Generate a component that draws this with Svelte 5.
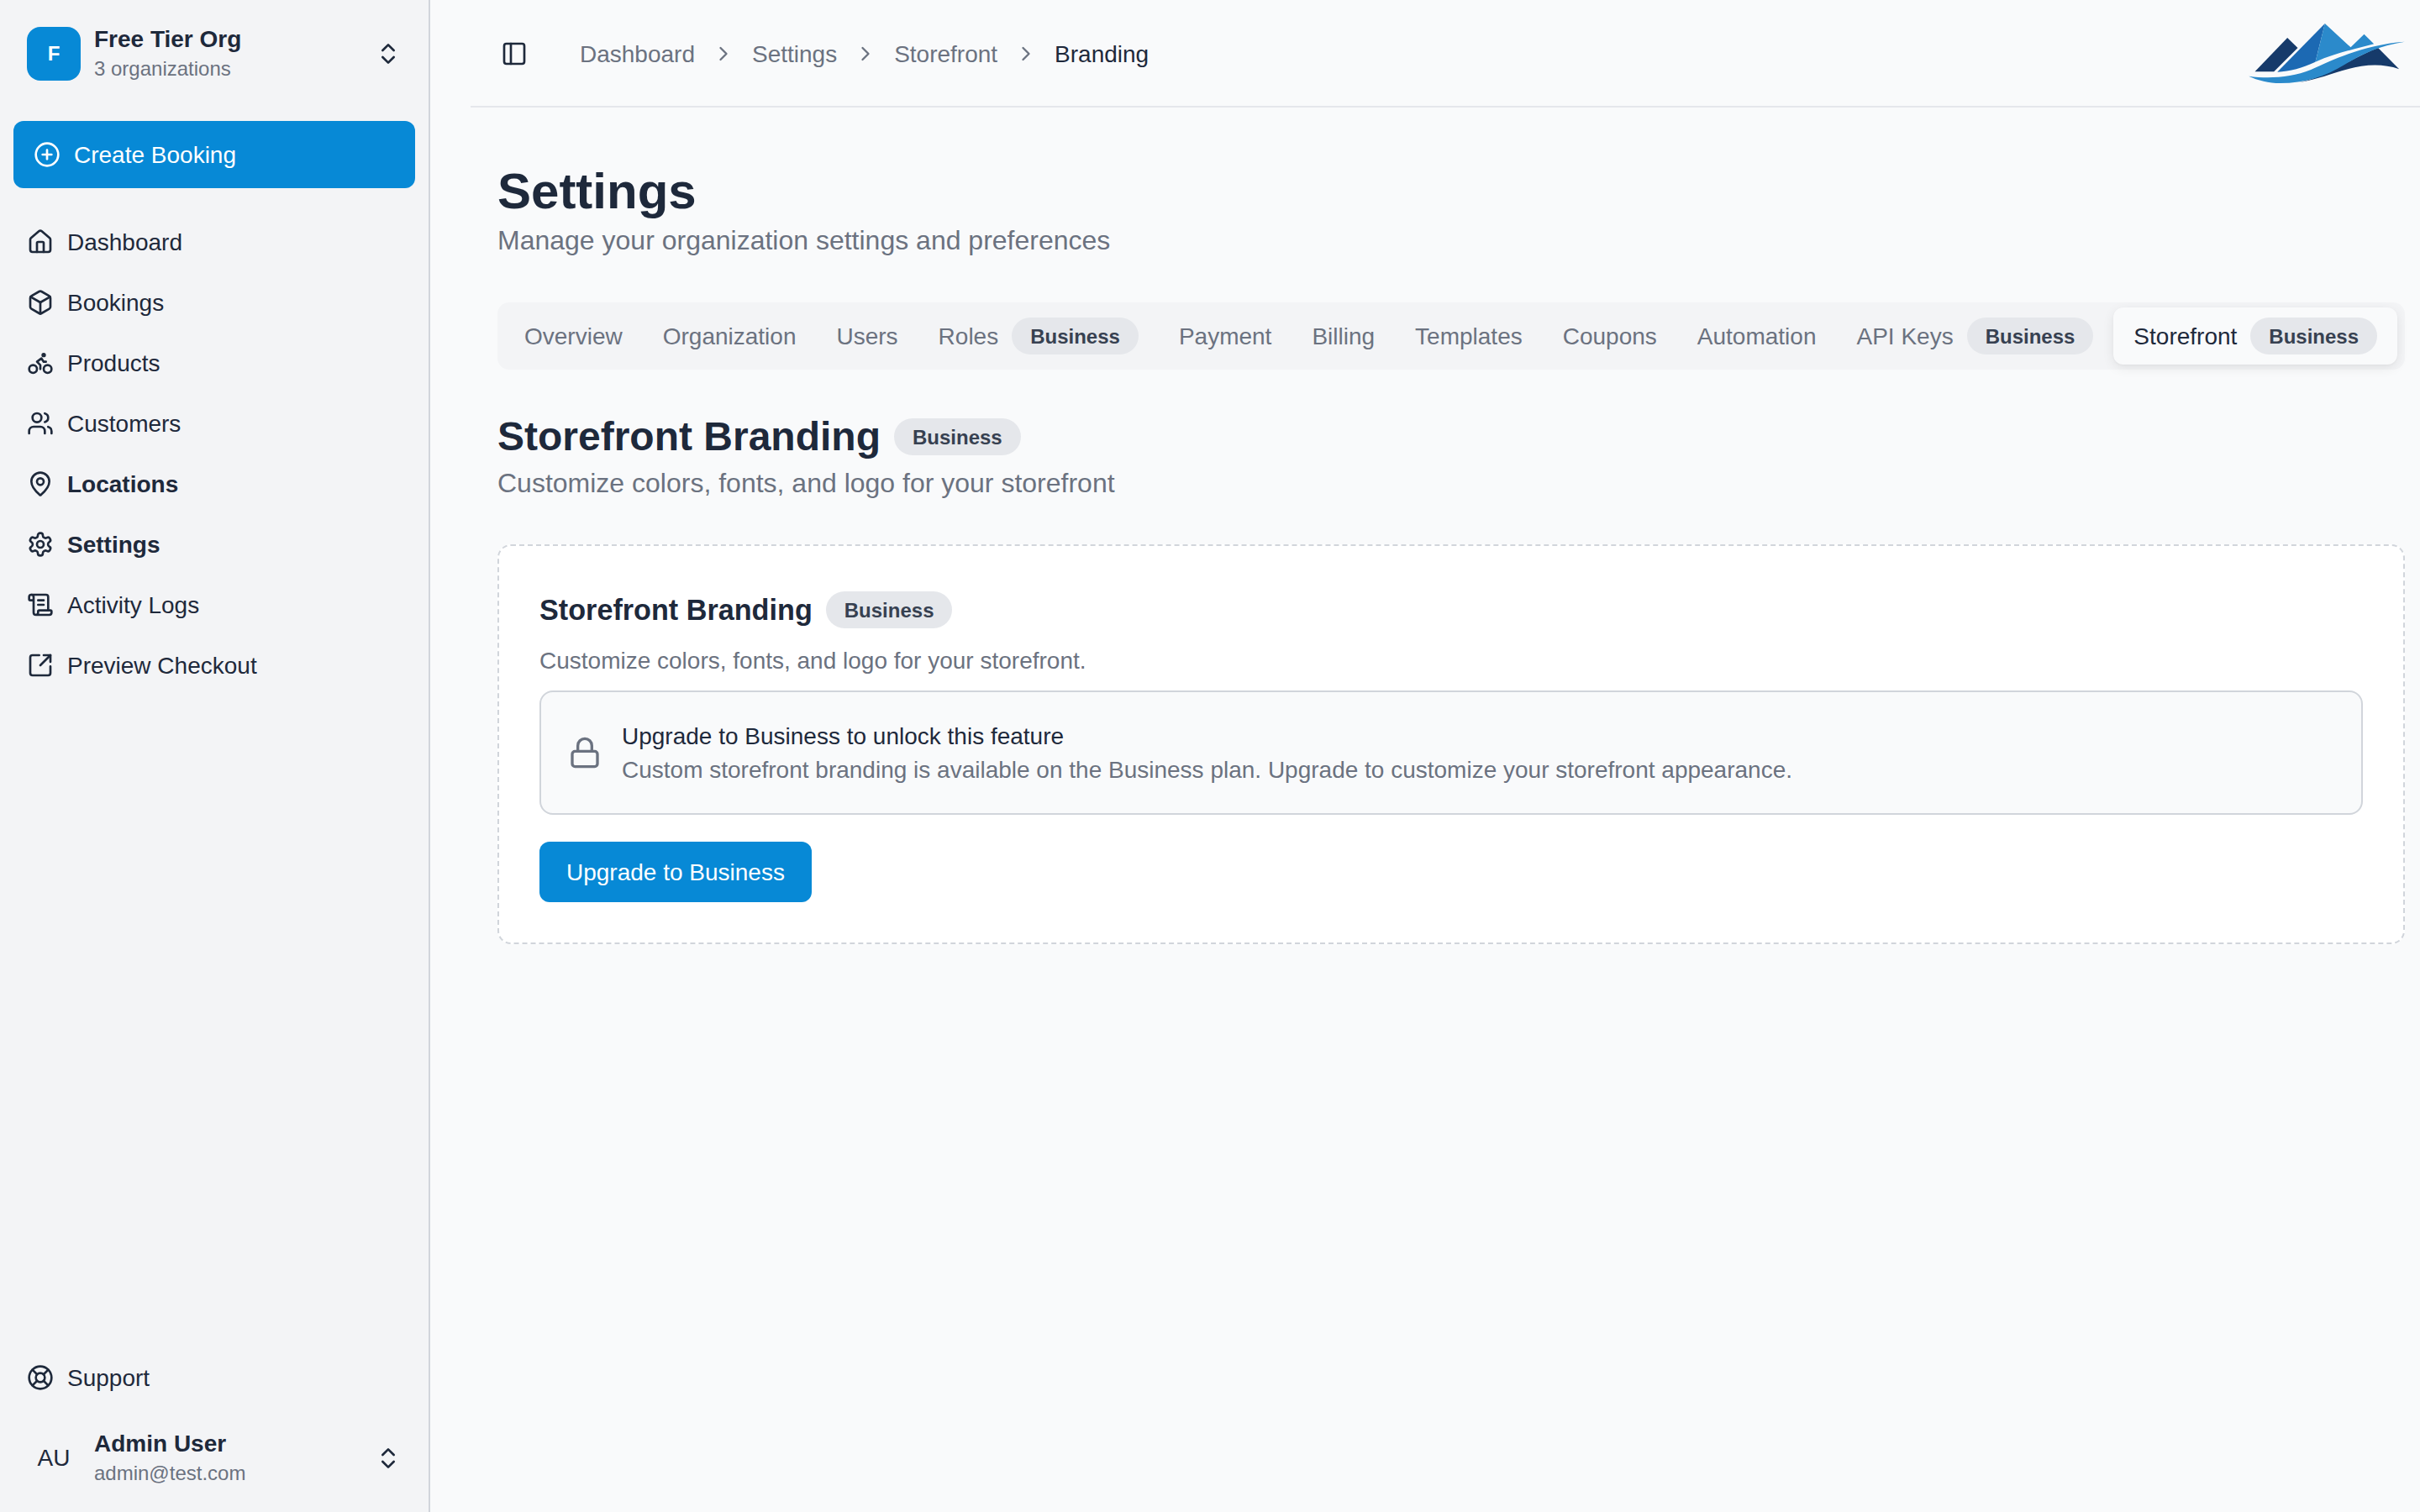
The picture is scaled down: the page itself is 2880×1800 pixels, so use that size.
<script>
  const house = { p: ["M15 21v-8a1 1 0 0 0-1-1h-4a1 1 0 0 0-1 1v8", "M3 10a2 2 0 0 1 .709-1.528l7-5.999a2 2 0 0 1 2.582 0l7 5.999A2 2 0 0 1 21 10v9a2 2 0 0 1-2 2H5a2 2 0 0 1-2-2z"], c: [] };
  const box = { p: ["M21 8a2 2 0 0 0-1-1.73l-7-4a2 2 0 0 0-2 0l-7 4A2 2 0 0 0 3 8v8a2 2 0 0 0 1 1.73l7 4a2 2 0 0 0 2 0l7-4A2 2 0 0 0 21 16Z", "m3.3 7 8.7 5 8.7-5", "M12 22V12"], c: [] };
  const bike = { p: ["M12 17.5V14l-3-3 4-3 2 3h2"], c: [[18.5, 17.5, 3.5], [5.5, 17.5, 3.5], [15, 5, 1]] };
  const users = { p: ["M16 21v-2a4 4 0 0 0-4-4H6a4 4 0 0 0-4 4v2", "M16 3.128a4 4 0 0 1 0 7.744", "M22 21v-2a4 4 0 0 0-3-3.87"], c: [[9, 7, 4]] };
  const pin = { p: ["M20 10c0 4.993-5.539 10.193-7.399 11.799a1 1 0 0 1-1.202 0C9.539 20.193 4 14.993 4 10a8 8 0 0 1 16 0"], c: [[12, 10, 3]] };
  const gear = { p: ["M12.22 2h-.44a2 2 0 0 0-2 2v.18a2 2 0 0 1-1 1.73l-.43.25a2 2 0 0 1-2 0l-.15-.08a2 2 0 0 0-2.73.73l-.22.38a2 2 0 0 0 .73 2.73l.15.1a2 2 0 0 1 1 1.72v.51a2 2 0 0 1-1 1.74l-.15.09a2 2 0 0 0-.73 2.73l.22.38a2 2 0 0 0 2.73.73l.15-.08a2 2 0 0 1 2 0l.43.25a2 2 0 0 1 1 1.73V20a2 2 0 0 0 2 2h.44a2 2 0 0 0 2-2v-.18a2 2 0 0 1 1-1.73l.43-.25a2 2 0 0 1 2 0l.15.08a2 2 0 0 0 2.73-.73l.22-.39a2 2 0 0 0-.73-2.73l-.15-.08a2 2 0 0 1-1-1.74v-.5a2 2 0 0 1 1-1.74l.15-.09a2 2 0 0 0 .73-2.73l-.22-.38a2 2 0 0 0-2.73-.73l-.15.08a2 2 0 0 1-2 0l-.43-.25a2 2 0 0 1-1-1.73V4a2 2 0 0 0-2-2z"], c: [[12, 12, 3]] };
  const scroll = { p: ["M15 12h-5", "M15 8h-5", "M19 17V5a2 2 0 0 0-2-2H4", "M8 21h12a2 2 0 0 0 2-2v-1a1 1 0 0 0-1-1H11a1 1 0 0 0-1 1v1a2 2 0 1 1-4 0V5a2 2 0 1 0-4 0v2a1 1 0 0 0 1 1h3"], c: [] };
  const ext = { p: ["M21 13v6a2 2 0 0 1-2 2H5a2 2 0 0 1-2-2V5a2 2 0 0 1 2-2h6", "m21 3-9 9", "M15 3h6v6"], c: [] };
  const buoy = { p: ["m4.93 4.93 4.24 4.24", "m14.83 9.17 4.24-4.24", "m14.83 14.83 4.24 4.24", "m9.17 14.83-4.24 4.24"], c: [[12, 12, 10], [12, 12, 4]] };
  const updown = { p: ["m7 15 5 5 5-5", "m7 9 5-5 5 5"], c: [] };
  const plus = { p: ["M8 12h8", "M12 8v8"], c: [[12, 12, 10]] };
  const panel = { p: ["M9 3v18"], c: [], r: [3, 3, 18, 18, 2] };
  const lock = { p: ["M7 11V7a5 5 0 0 1 10 0v4"], c: [], r: [3, 11, 18, 11, 2] };
  const chev = { p: ["m9 18 6-6-6-6"], c: [] };

  const nav = [
    { label: "Dashboard", icon: house },
    { label: "Bookings", icon: box },
    { label: "Products", icon: bike },
    { label: "Customers", icon: users },
    { label: "Locations", icon: pin, strong: true },
    { label: "Settings", icon: gear, strong: true },
    { label: "Activity Logs", icon: scroll },
    { label: "Preview Checkout", icon: ext }
  ];
  const crumbs = ["Dashboard", "Settings", "Storefront"];
  const tabs = [
    { label: "Overview" },
    { label: "Organization" },
    { label: "Users" },
    { label: "Roles", badge: true },
    { label: "Payment" },
    { label: "Billing" },
    { label: "Templates" },
    { label: "Coupons" },
    { label: "Automation" },
    { label: "API Keys", badge: true },
    { label: "Storefront", badge: true, active: true }
  ];
</script>

{#snippet icon(d, size)}
  <svg class="icon" width={size} height={size} viewBox="0 0 24 24" fill="none" stroke="currentColor" stroke-width="2" stroke-linecap="round" stroke-linejoin="round">
    {#if d.r}<rect x={d.r[0]} y={d.r[1]} width={d.r[2]} height={d.r[3]} rx={d.r[4]} />{/if}
    {#each d.c as c}<circle cx={c[0]} cy={c[1]} r={c[2]} />{/each}
    {#each d.p as p}<path d={p} />{/each}
  </svg>
{/snippet}

<div class="app">
  <aside class="sidebar">
    <div class="switcher">
      <div class="org-mark">F</div>
      <div class="who">
        <div class="who-name">Free Tier Org</div>
        <div class="who-sub">3 organizations</div>
      </div>
      {@render icon(updown, 32)}
    </div>
    <button class="create">
      {@render icon(plus, 32)}
      <span class="nudge">Create Booking</span>
    </button>
    <nav class="nav">
      {#each nav as item}
        <div class="nav-row" class:strong={item.strong}>
          {@render icon(item.icon, 32)}
          <span class="nudge">{item.label}</span>
        </div>
      {/each}
    </nav>
    <div class="foot">
      <div class="nav-row">
        {@render icon(buoy, 32)}
        <span class="nudge">Support</span>
      </div>
      <div class="switcher user">
        <div class="avatar">AU</div>
        <div class="who">
          <div class="who-name">Admin User</div>
          <div class="who-sub">admin@test.com</div>
        </div>
        {@render icon(updown, 32)}
      </div>
    </div>
  </aside>

  <main class="main">
    <header class="top">
      <div class="toggle">{@render icon(panel, 32)}</div>
      <div class="crumbs">
        {#each crumbs as c}
          <span class="nudge">{c}</span>
          <span class="sep">{@render icon(chev, 28)}</span>
        {/each}
        <span class="nudge current">Branding</span>
      </div>
      <svg class="logo" width="186" height="71" viewBox="228 85 557 213" aria-label="Logo">
        <path fill="#163a6a" d="M250 257 366 136 403 172 318 257Z" />
        <path fill="#1c69b3" d="M330 258 500 85 466 222C420 243 375 256 330 258Z" />
        <path fill="#2b8acb" d="M500 85 592 170 640 123 675 158C610 175 540 190 466 222Z" />
        <path fill="#163a6a" d="M690 172 765 248C700 225 630 232 560 254 500 273 450 290 405 296 500 280 600 205 690 172Z" />
        <path fill="#2b8acb" d="M228 273C300 283 380 278 450 250 530 215 640 160 785 150 690 165 630 195 570 232 500 275 430 298 340 298 300 298 260 288 228 273Z" />
      </svg>
    </header>

    <div class="content">
      <h1 class="title">Settings</h1>
      <p class="lead">Manage your organization settings and preferences</p>

      <div class="tabs">
        {#each tabs as t}
          <div class="tab" class:active={t.active}>
            <span class="nudge">{t.label}</span>
            {#if t.badge}<span class="badge">Business</span>{/if}
          </div>
        {/each}
      </div>

      <div class="section-head">
        <h2 class="section-title">Storefront Branding</h2>
        <span class="badge">Business</span>
      </div>
      <p class="lead section-lead">Customize colors, fonts, and logo for your storefront</p>

      <section class="card">
        <div class="card-head">
          <h3 class="card-title">Storefront Branding</h3>
          <span class="badge">Business</span>
        </div>
        <p class="card-desc">Customize colors, fonts, and logo for your storefront.</p>
        <div class="alert">
          <span class="alert-icon">{@render icon(lock, 40)}</span>
          <div class="alert-body">
            <div class="alert-title">Upgrade to Business to unlock this feature</div>
            <div class="alert-desc">Custom storefront branding is available on the Business plan. Upgrade to customize your storefront appearance.</div>
          </div>
        </div>
        <button class="upgrade"><span class="nudge">Upgrade to Business</span></button>
      </section>
    </div>
  </main>
</div>

<style>
  :global(body) {
    margin: 0;
    background: #f9fafb;
    font-family: "Liberation Sans", Arial, sans-serif;
    color: #1e293b;
  }
  .app {
    display: flex;
    height: 100vh;
    overflow: hidden;
  }
  .icon {
    display: block;
    flex: none;
  }
  .nudge {
    display: block;
    padding-top: 2px;
  }
  .sidebar {
    box-sizing: border-box;
    width: 512px;
    flex: none;
    display: flex;
    flex-direction: column;
    background: #f3f4f6;
    border-right: 2px solid #d1d5db;
    padding: 32px 16px 32px 16px;
  }
  .switcher {
    display: flex;
    align-items: center;
    gap: 16px;
    height: 64px;
    padding: 0 16px;
  }
  .org-mark,
  .avatar {
    width: 64px;
    height: 64px;
    flex: none;
    display: flex;
    align-items: center;
    justify-content: center;
    font-size: 28px;
  }
  .org-mark {
    background: #0789d6;
    border-radius: 16px;
    color: #fff;
    font-weight: 700;
    font-size: 24px;
  }
  .who {
    flex: 1;
    min-width: 0;
  }
  .who-name {
    font-size: 28px;
    font-weight: 700;
    line-height: 34px;
    margin-bottom: 2px;
  }
  .who-sub {
    font-size: 24px;
    line-height: 32px;
    color: #6b7280;
  }
  .create {
    display: flex;
    align-items: center;
    gap: 16px;
    width: 478px;
    height: 80px;
    margin-top: 48px;
    padding: 0 24px;
    border: none;
    border-radius: 12px;
    background: #0789d6;
    color: #fff;
    font: inherit;
    font-size: 28px;
  }
  .nav {
    margin-top: 28px;
  }
  .nav-row {
    display: flex;
    align-items: center;
    gap: 16px;
    height: 72px;
    padding: 0 16px;
    font-size: 28px;
  }
  .nav-row.strong {
    font-weight: 700;
  }
  .foot {
    margin-top: auto;
  }
  .user {
    margin-top: 28px;
  }
  .main {
    flex: 1;
    min-width: 0;
    padding-left: 48px;
    display: flex;
    flex-direction: column;
  }
  .top {
    box-sizing: border-box;
    height: 128px;
    flex: none;
    display: flex;
    align-items: center;
    padding: 2px 18px 0 36px;
    border-bottom: 2px solid #e5e7eb;
  }
  .toggle {
    width: 32px;
    margin-right: 62px;
  }
  .logo {
    margin-bottom: 2px;
  }
  .crumbs {
    flex: 1;
    display: flex;
    align-items: center;
    gap: 20px;
    font-size: 28px;
    color: #6b7280;
  }
  .current {
    color: #1e293b;
  }
  .content {
    padding: 64px 18px 0 32px;
  }
  .title {
    margin: 0 0 -2px;
    font-size: 60px;
    line-height: 72px;
    font-weight: 700;
  }
  .lead {
    margin: 0;
    font-size: 32px;
    line-height: 48px;
    color: #6b7280;
  }
  .section-lead {
    margin-top: -1px;
  }
  .tabs {
    display: flex;
    align-items: center;
    height: 80px;
    box-sizing: border-box;
    margin-top: 50px;
    padding: 6px 6px 6px 8px;
    border-radius: 14px;
    background: #f3f4f6;
  }
  .tab {
    display: flex;
    align-items: center;
    gap: 16px;
    height: 68px;
    padding: 0 24px;
    font-size: 28px;
    color: #6b7280;
    border-radius: 12px;
  }
  .tab.active {
    background: #f9fafb;
    color: #1e293b;
    box-shadow: 0 4px 14px rgba(0, 0, 0, 0.08), 0 1px 3px rgba(0, 0, 0, 0.03);
  }
  .badge {
    display: inline-block;
    height: 44px;
    box-sizing: border-box;
    padding: 7px 22px 5px;
    line-height: 32px;
    border-radius: 22px;
    background: #e5e7eb;
    color: #374151;
    font-size: 24px;
    font-weight: 700;
  }
  .section-head {
    display: flex;
    align-items: center;
    gap: 16px;
    margin-top: 46px;
  }
  .section-title {
    margin: 0;
    padding-top: 2px;
    font-size: 48px;
    line-height: 64px;
    font-weight: 700;
  }
  .section-head .badge {
    margin-top: 2px;
  }
  .card {
    margin-top: 49px;
    padding: 48px;
    border: 2px dashed #d1d5db;
    border-radius: 16px;
    background: #fff;
  }
  .card-head {
    display: flex;
    align-items: center;
    gap: 16px;
    height: 56px;
  }
  .card-title {
    margin: 0;
    font-size: 34.2px;
    line-height: 56px;
    font-weight: 700;
  }
  .card-desc {
    margin: 13px 0 0;
    font-size: 28px;
    line-height: 40px;
    color: #6b7280;
  }
  .alert {
    display: flex;
    align-items: center;
    gap: 24px;
    margin-top: 15px;
    padding: 32px 32px 32px;
    border: 2px solid #d1d5db;
    border-radius: 16px;
    background: #f9fafb;
    font-size: 28px;
    line-height: 40px;
  }
  .alert-icon {
    color: #6b7280;
  }
  .alert-body {
    padding-top: 1px;
    margin-bottom: -1px;
  }
  .alert-desc {
    color: #6b7280;
  }
  .upgrade {
    display: block;
    height: 72px;
    margin-top: 32px;
    padding: 0 32px;
    border: none;
    border-radius: 12px;
    background: #0789d6;
    color: #fff;
    font: inherit;
    font-size: 28px;
  }
</style>
